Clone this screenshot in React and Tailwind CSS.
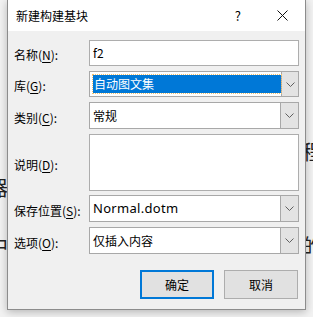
import React from "react";

const font = { fontFamily: '"Noto Sans CJK SC", "Noto Sans", sans-serif' };

function Chevron() {
  return (
    <svg width="9" height="5" viewBox="0 0 9 5" className="block">
      <polyline points="0.5,0.5 4.5,4.5 8.5,0.5" fill="none" stroke="#606060" strokeWidth="1" />
    </svg>
  );
}

function Label({ text, acc, tail = "):" }) {
  return (
    <span className="text-[12px] leading-none text-[#000] whitespace-nowrap">
      {text}(<span className="underline underline-offset-2">{acc}</span>{tail}
    </span>
  );
}

function Combo({ children, h = "h-[27px]" }) {
  return (
    <div className={`flex ${h} w-[210px] border border-[#a8a8a8] bg-white`}>
      <div className="flex flex-1 items-center pl-[3px] border-r border-[#a8a8a8]">{children}</div>
      <div className="flex w-[17px] items-center justify-center bg-[#e3e3e3]">
        <Chevron />
      </div>
    </div>
  );
}

function Row({ label, children, className = "" }) {
  return (
    <div className={`flex items-center ${className}`}>
      <div className="w-[75px]">{label}</div>
      {children}
    </div>
  );
}

export default function App() {
  return (
    <div className="relative w-[313px] h-[317px] overflow-hidden bg-[#f2f2f2]" style={font}>
      {/* background document fragments */}
      <span className="absolute left-[-12px] top-[178px] text-[20px] leading-none text-[#222]">器</span>
      <span className="absolute left-[-12px] top-[236px] text-[20px] leading-none text-[#222]">中</span>
      <span className="absolute left-[302px] top-[142px] text-[20px] leading-none text-[#222]">程</span>
      <span className="absolute left-[302px] top-[236px] text-[20px] leading-none text-[#222]">的</span>

      <div className="absolute left-[7px] top-0 w-[299px] h-[310px] bg-[#f0f0f0] border-x border-b border-[#8c8c8c] shadow-[0_2px_8px_rgba(0,0,0,0.25)] flex flex-col">
        <div className="flex h-[31px] items-center bg-white pl-[8px] text-[12px] text-black">
          <span>新建构建基块</span>
          <span className="ml-auto mr-[36px] text-[13px]">?</span>
          <svg width="11" height="11" viewBox="0 0 11 11" className="mr-[17px]">
            <path d="M0.5 0.5 L10.5 10.5 M10.5 0.5 L0.5 10.5" stroke="#111" strokeWidth="1" />
          </svg>
        </div>

        <div className="flex flex-col pl-[6px] pt-[9px]">
          <Row label={<Label text="名称" acc="N" />}>
            <div className="flex h-[26px] w-[210px] items-center border border-[#adadad] bg-white pl-[3px] text-[12px]">f2</div>
          </Row>
          <Row label={<Label text="库" acc="G" />} className="mt-[5px]">
            <Combo h="h-[26px]">
              <div className="flex h-[18px] w-[188px] items-center bg-[#0078d7] outline outline-1 outline-dotted outline-[#f0c070] pl-[1px] text-[12px] text-white">
                自动图文集
              </div>
            </Combo>
          </Row>
          <Row label={<Label text="类别" acc="C" />} className="mt-[5px]">
            <Combo>
              <span className="text-[12px]">常规</span>
            </Combo>
          </Row>
          <Row label={<Label text="说明" acc="D" />} className="mt-[5px]">
            <div className="h-[57px] w-[210px] border border-[#adadad] bg-white" />
          </Row>
          <Row label={<Label text="保存位置" acc="S" />} className="mt-[4px]">
            <Combo>
              <span className="text-[13px] tracking-[0.3px]" style={{ fontFamily: '"Noto Sans", sans-serif' }}>Normal.dotm</span>
            </Combo>
          </Row>
          <Row label={<Label text="选项" acc="O" />} className="mt-[5px]">
            <Combo>
              <span className="text-[12px]">仅插入内容</span>
            </Combo>
          </Row>
        </div>

        <div className="mt-[16px] flex justify-end gap-[10px] pr-[7px]">
          <button className="flex h-[29px] w-[74px] items-center justify-center border-2 border-[#0078d7] bg-[#e1e1e1] text-[12px] text-black">
            确定
          </button>
          <button className="flex h-[29px] w-[74px] items-center justify-center border border-[#adadad] bg-[#e1e1e1] text-[12px] text-black">
            取消
          </button>
        </div>
      </div>
    </div>
  );
}
